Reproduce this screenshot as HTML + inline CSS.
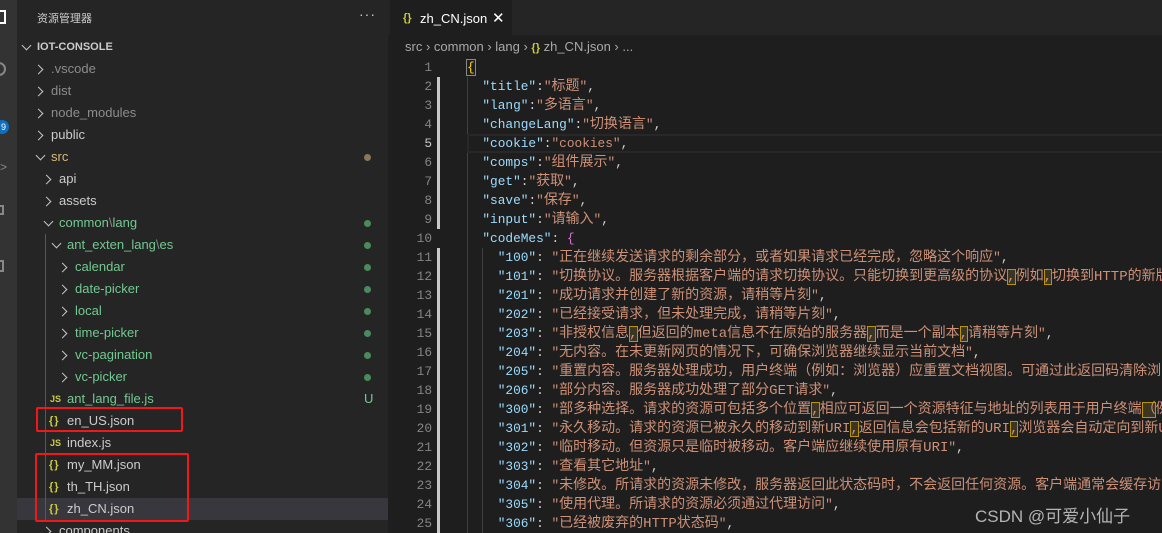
<!DOCTYPE html>
<html><head><meta charset="utf-8"><style>
*{margin:0;padding:0;box-sizing:border-box}
body{width:1162px;height:533px;overflow:hidden;background:#1e1e1e;font-family:"Liberation Sans","Noto Sans CJK SC",sans-serif;position:relative}
#act{position:absolute;left:0;top:0;width:17px;height:533px;background:#333}
#side{position:absolute;left:17px;top:0;width:371px;height:533px;background:#252526;overflow:hidden}
#side .hd{position:absolute;left:20px;top:10px;font-size:11px;color:#ccc}
#side .dots{position:absolute;left:342px;top:6px;color:#ccc;font-size:14px;letter-spacing:1px}
.row{position:absolute;left:0;width:371px;height:22px;line-height:22px;font-size:13px;color:#ccc;white-space:nowrap}
.cr,.cd{position:absolute;width:7px;height:7px;border-right:1.3px solid #c5c5c5;border-bottom:1.3px solid #c5c5c5}
.cr{top:7.5px;transform:rotate(-45deg)}
.cd{top:5.5px;transform:rotate(45deg)}
.row .t{position:absolute;top:0}
.dot{position:absolute;left:347px;top:8px;width:7px;height:7px;border-radius:50%;background:#4c8a5e}
.g{color:#73c991}
.gr{color:#8c8c8c}
.js{position:absolute;top:0;font-size:9px;font-weight:bold;color:#cbcb41}
.jn{position:absolute;top:0;font-size:11px;font-weight:bold;color:#cbcb41;letter-spacing:1px}
#tabs{position:absolute;left:388px;top:0;width:774px;height:35px;background:#252526}
#tab{position:absolute;left:390px;top:0;width:122px;height:35px;background:#1e1e1e;font-size:13px;color:#fff;line-height:37px}
#bc{position:absolute;left:405px;top:39px;font-size:13px;color:#a9a9a9;white-space:nowrap}
#code{position:absolute;left:390px;top:58px;width:772px;height:475px;overflow:hidden;font-family:"Liberation Mono","Noto Sans CJK SC",monospace;font-size:12.8px}
.ln{position:absolute;left:0;width:42px;text-align:right;color:#858585;height:19px;line-height:19px}
.cl{position:absolute;left:77px;height:19px;line-height:19px;white-space:pre;color:#d4d4d4}
.k{color:#9cdcfe}.s{color:#ce9178}.c{color:#ce9178;font-size:14px}
.hl{outline:1px solid #b89500;background:#3b3522;outline-offset:-1px}
.bar{position:absolute;left:47px;width:3px;background:#c8c8c8}
.ig{position:absolute;width:1px;background:#404040}
.red{position:absolute;border:2px solid #f21818;border-radius:2px}
</style></head><body>
<div id="act">
 <div style="position:absolute;left:0;top:10px;width:6px;height:14px;border:2px solid #fff;border-left:none"></div>
 <div style="position:absolute;left:-8px;top:62px;width:14px;height:14px;border:2px solid #888;border-radius:50%"></div>
 <div style="position:absolute;left:-5px;top:120px;width:14px;height:14px;border-radius:50%;background:#0e70c0;color:#fff;font-size:9px;line-height:14px;text-align:right;padding-right:3px">9</div>
 <div style="position:absolute;left:0;top:160px;color:#888;font-size:12px">&gt;</div>
 <div style="position:absolute;left:-6px;top:205px;width:10px;height:10px;border:2px solid #888"></div>
 <div style="position:absolute;left:-6px;top:260px;width:10px;height:12px;border:2px solid #888"></div>
</div>
<div id="side">
 <div class="hd">资源管理器</div><div class="dots">···</div>
 <div class="row" style="top:36px;font-weight:bold;font-size:11px"><span class="cd" style="left:6px"></span><span class="t" style="left:20px">IOT-CONSOLE</span></div>
 <div class="row gr" style="top:58px"><span class="cr" style="left:18px"></span><span class="t" style="left:34px">.vscode</span></div>
 <div class="row gr" style="top:80px"><span class="cr" style="left:18px"></span><span class="t" style="left:34px">dist</span></div>
 <div class="row gr" style="top:102px"><span class="cr" style="left:18px"></span><span class="t" style="left:34px">node_modules</span></div>
 <div class="row" style="top:124px"><span class="cr" style="left:18px"></span><span class="t" style="left:34px">public</span></div>
 <div class="row" style="top:146px;color:#d7ba7d"><span class="cd" style="left:20px"></span><span class="t" style="left:34px">src</span><span class="dot" style="background:#8a7658"></span></div>
 <div class="row" style="top:168px"><span class="cr" style="left:26px"></span><span class="t" style="left:42px">api</span></div>
 <div class="row" style="top:190px"><span class="cr" style="left:26px"></span><span class="t" style="left:42px">assets</span></div>
 <div class="row g" style="top:212px"><span class="cd" style="left:28px"></span><span class="t" style="left:42px">common<span style="color:#888">\</span>lang</span><span class="dot"></span></div>
 <div class="row g" style="top:234px"><span class="cd" style="left:36px"></span><span class="t" style="left:50px">ant_exten_lang<span style="color:#888">\</span>es</span><span class="dot"></span></div>
 <div class="row g" style="top:256px"><span class="cr" style="left:42px"></span><span class="t" style="left:58px">calendar</span><span class="dot"></span></div>
 <div class="row g" style="top:278px"><span class="cr" style="left:42px"></span><span class="t" style="left:58px">date-picker</span><span class="dot"></span></div>
 <div class="row g" style="top:300px"><span class="cr" style="left:42px"></span><span class="t" style="left:58px">local</span><span class="dot"></span></div>
 <div class="row g" style="top:322px"><span class="cr" style="left:42px"></span><span class="t" style="left:58px">time-picker</span><span class="dot"></span></div>
 <div class="row g" style="top:344px"><span class="cr" style="left:42px"></span><span class="t" style="left:58px">vc-pagination</span><span class="dot"></span></div>
 <div class="row g" style="top:366px"><span class="cr" style="left:42px"></span><span class="t" style="left:58px">vc-picker</span><span class="dot"></span></div>
 <div class="row g" style="top:388px"><span class="js" style="left:33px">JS</span><span class="t" style="left:50px">ant_lang_file.js</span><span class="t" style="left:347px">U</span></div>
 <div class="row" style="top:410px"><span class="jn" style="left:32px">{}</span><span class="t" style="left:50px">en_US.json</span></div>
 <div class="row" style="top:432px"><span class="js" style="left:33px">JS</span><span class="t" style="left:50px">index.js</span></div>
 <div class="row" style="top:454px"><span class="jn" style="left:32px">{}</span><span class="t" style="left:50px">my_MM.json</span></div>
 <div class="row" style="top:476px"><span class="jn" style="left:32px">{}</span><span class="t" style="left:50px">th_TH.json</span></div>
 <div class="row" style="top:498px;background:#37373d"><span class="jn" style="left:32px">{}</span><span class="t" style="left:50px">zh_CN.json</span></div>
 <div class="row" style="top:520px"><span class="cr" style="left:26px"></span><span class="t" style="left:42px">components</span></div>
 <div style="position:absolute;left:28px;top:234px;width:1px;height:286px;background:#585858"></div>
</div>
<div class="red" style="left:36px;top:407px;width:147px;height:25px"></div>
<div class="red" style="left:35px;top:453px;width:154px;height:69px"></div>
<div id="tabs"></div>
<div id="tab"><span style="position:absolute;left:13px;color:#cbcb41;font-size:11px;font-weight:bold">{}</span><span style="position:absolute;left:30px">zh_CN.json</span><span style="position:absolute;left:102px;font-size:15px">✕</span></div>
<div id="bc">src › common › lang › <span style="color:#cbcb41;font-weight:bold;font-size:11px">{}</span> zh_CN.json › ...</div>
<div id="code">
 <div class="bar" style="top:19px;height:152px"></div>
 <div class="bar" style="top:190px;height:285px"></div>
 <div class="ig" style="left:77px;top:19px;height:456px"></div>
 <div class="ig" style="left:92px;top:190px;height:285px"></div>
 <div style="position:absolute;left:77px;top:76px;width:700px;height:19px;border:2px solid #282828"></div>
 <div class="ln" style="top:0">1</div><div class="ln" style="top:19px">2</div><div class="ln" style="top:38px">3</div><div class="ln" style="top:57px">4</div><div class="ln" style="top:76px;color:#c6c6c6">5</div><div class="ln" style="top:95px">6</div><div class="ln" style="top:114px">7</div><div class="ln" style="top:133px">8</div><div class="ln" style="top:152px">9</div><div class="ln" style="top:171px">10</div><div class="ln" style="top:190px">11</div><div class="ln" style="top:209px">12</div><div class="ln" style="top:228px">13</div><div class="ln" style="top:247px">14</div><div class="ln" style="top:266px">15</div><div class="ln" style="top:285px">16</div><div class="ln" style="top:304px">17</div><div class="ln" style="top:323px">18</div><div class="ln" style="top:342px">19</div><div class="ln" style="top:361px">20</div><div class="ln" style="top:380px">21</div><div class="ln" style="top:399px">22</div><div class="ln" style="top:418px">23</div><div class="ln" style="top:437px">24</div><div class="ln" style="top:456px">25</div>
 <div class="cl" style="top:0"><span style="color:#ffd700;outline:1px solid #888">{</span></div>
 <div class="cl" style="top:19px">  <span class="k">"title"</span>:<span class="s">"</span><span class="c">标题</span><span class="s">"</span>,</div>
 <div class="cl" style="top:38px">  <span class="k">"lang"</span>:<span class="s">"</span><span class="c">多语言</span><span class="s">"</span>,</div>
 <div class="cl" style="top:57px">  <span class="k">"changeLang"</span>:<span class="s">"</span><span class="c">切换语言</span><span class="s">"</span>,</div>
 <div class="cl" style="top:76px">  <span class="k">"cookie"</span>:<span class="s">"cookies"</span>,</div>
 <div class="cl" style="top:95px">  <span class="k">"comps"</span>:<span class="s">"</span><span class="c">组件展示</span><span class="s">"</span>,</div>
 <div class="cl" style="top:114px">  <span class="k">"get"</span>:<span class="s">"</span><span class="c">获取</span><span class="s">"</span>,</div>
 <div class="cl" style="top:133px">  <span class="k">"save"</span>:<span class="s">"</span><span class="c">保存</span><span class="s">"</span>,</div>
 <div class="cl" style="top:152px">  <span class="k">"input"</span>:<span class="s">"</span><span class="c">请输入</span><span class="s">"</span>,</div>
 <div class="cl" style="top:171px">  <span class="k">"codeMes"</span>: <span style="color:#da70d6">{</span></div>
 <div class="cl" style="top:190px">    <span class="k">"100"</span>: <span class="s">"</span><span class="c">正在继续发送请求的剩余部分，或者如果请求已经完成，忽略这个响应</span><span class="s">"</span>,</div>
 <div class="cl" style="top:209px">    <span class="k">"101"</span>: <span class="s">"</span><span class="c">切换协议。服务器根据客户端的请求切换协议。只能切换到更高级的协议<span class="hl">,</span>例如<span class="hl">,</span>切换到HTTP的新版本协议</span></div>
 <div class="cl" style="top:228px">    <span class="k">"201"</span>: <span class="s">"</span><span class="c">成功请求并创建了新的资源，请稍等片刻</span><span class="s">"</span>,</div>
 <div class="cl" style="top:247px">    <span class="k">"202"</span>: <span class="s">"</span><span class="c">已经接受请求，但未处理完成，请稍等片刻</span><span class="s">"</span>,</div>
 <div class="cl" style="top:266px">    <span class="k">"203"</span>: <span class="s">"</span><span class="c">非授权信息<span class="hl">,</span>但返回的meta信息不在原始的服务器<span class="hl">,</span>而是一个副本<span class="hl">,</span>请稍等片刻</span><span class="s">"</span>,</div>
 <div class="cl" style="top:285px">    <span class="k">"204"</span>: <span class="s">"</span><span class="c">无内容。在未更新网页的情况下，可确保浏览器继续显示当前文档</span><span class="s">"</span>,</div>
 <div class="cl" style="top:304px">    <span class="k">"205"</span>: <span class="s">"</span><span class="c">重置内容。服务器处理成功，用户终端（例如：浏览器）应重置文档视图。可通过此返回码清除浏览器</span></div>
 <div class="cl" style="top:323px">    <span class="k">"206"</span>: <span class="s">"</span><span class="c">部分内容。服务器成功处理了部分GET请求</span><span class="s">"</span>,</div>
 <div class="cl" style="top:342px">    <span class="k">"300"</span>: <span class="s">"</span><span class="c">部多种选择。请求的资源可包括多个位置<span class="hl">,</span>相应可返回一个资源特征与地址的列表用于用户终端<span class="hl">（</span>例如</span></div>
 <div class="cl" style="top:361px">    <span class="k">"301"</span>: <span class="s">"</span><span class="c">永久移动。请求的资源已被永久的移动到新URI<span class="hl">,</span>返回信息会包括新的URI<span class="hl">,</span>浏览器会自动定向到新URI</span></div>
 <div class="cl" style="top:380px">    <span class="k">"302"</span>: <span class="s">"</span><span class="c">临时移动。但资源只是临时被移动。客户端应继续使用原有URI</span><span class="s">"</span>,</div>
 <div class="cl" style="top:399px">    <span class="k">"303"</span>: <span class="s">"</span><span class="c">查看其它地址</span><span class="s">"</span>,</div>
 <div class="cl" style="top:418px">    <span class="k">"304"</span>: <span class="s">"</span><span class="c">未修改。所请求的资源未修改，服务器返回此状态码时，不会返回任何资源。客户端通常会缓存访问过的资源</span></div>
 <div class="cl" style="top:437px">    <span class="k">"305"</span>: <span class="s">"</span><span class="c">使用代理。所请求的资源必须通过代理访问</span><span class="s">"</span>,</div>
 <div class="cl" style="top:456px">    <span class="k">"306"</span>: <span class="s">"</span><span class="c">已经被废弃的HTTP状态码</span><span class="s">"</span>,</div>
</div>
<div style="position:absolute;left:975px;top:502px;font-size:17px;color:#b4b4b4;white-space:nowrap">CSDN @可爱小仙子</div>
</body></html>
